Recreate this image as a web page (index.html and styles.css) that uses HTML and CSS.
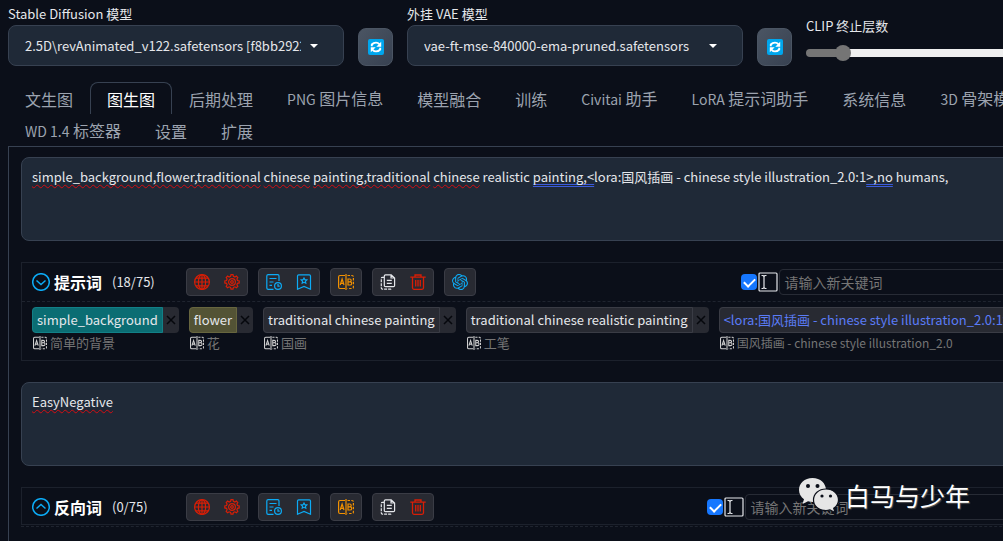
FILE: index.html
```html
<!DOCTYPE html>
<html lang="zh-CN">

<head>
    <meta charset="UTF-8">
    <meta name="viewport" content="width=device-width, initial-scale=1.0">
    <title>Stable Diffusion</title>
    <link rel="stylesheet" href="styles.css">
</head>

<body>
    <!-- shared icons -->
    <svg class="sprite" aria-hidden="true">
        <symbol id="i-refresh" viewBox="0 0 16 16">
            <rect width="16" height="16" rx="2" fill="#00a6ed" />
            <path d="M3.800 7.200V5.500Q5.500 3.600 8 3.600q2 0 3.300 1.600M12.200 8.800v1.700Q10.500 12.400 8 12.400q-2 0-3.300-1.600" fill="none" stroke="#fff" stroke-width="1.900" />
            <path d="M13.200 2.800v5H8.300zM2.800 13.200v-5h4.900z" fill="#fff" />
        </symbol>
        <symbol id="i-globe" viewBox="0 0 16 16">
            <circle cx="8" cy="8" r="7.400" />
            <ellipse cx="8" cy="8" rx="3.600" ry="7.400" />
            <path d="M8 .6v14.800M.6 8h14.800M2 4.200h12M2 11.800h12" />
        </symbol>
        <symbol id="i-gear" viewBox="0 0 16 16">
            <path d="M6.600 2.400 7 .7h2l.4 1.700 1.500.6 1.500-.9 1.400 1.400-.9 1.500.6 1.500 1.700.4v2l-1.700.4-.6 1.500.9 1.500-1.400 1.400-1.500-.9-1.500.6-.4 1.700H7l-.4-1.700-1.500-.6-1.500.9-1.400-1.400.9-1.500-.6-1.500L.8 8.900v-2l1.700-.4.6-1.500-.9-1.500 1.400-1.400 1.500.9z" />
            <circle cx="8" cy="8" r="3.400" />
            <circle cx="8" cy="8" r="1.300" />
        </symbol>
        <symbol id="i-history" viewBox="0 0 16 16">
            <path d="M7.500 15.300H2.200Q.8 15.300.8 14V2Q.8.700 2.200.700h9.600Q13 .7 13 2v5M3.500 4.500h7M3.500 8h4M3.500 11.300h2.500" />
            <circle cx="12" cy="12" r="3.400" />
            <path d="M12 10v2.200h1.700" />
        </symbol>
        <symbol id="i-mark" viewBox="0 0 16 16">
            <path d="M1.500 15.200V2Q1.500.8 2.700.8h10.600q1.200 0 1.200 1.200v13.200L8 12.500z" />
            <path d="m8 4 .9 1.700 1.900.3-1.400 1.300.4 1.900L8 8.300l-1.800.9.400-1.900L5.200 6l1.900-.3z" />
        </symbol>
        <symbol id="i-ab" viewBox="0 0 16 16">
            <path d="M7 1.500H2Q.6 1.500.6 3v10q0 1.500 1.400 1.500h5M8 0v16" />
            <path d="M9.500 1.500H14q1.400 0 1.400 1.500v10q0 1.500-1.400 1.500H9.500" stroke-dasharray="2.500 1.300" />
            <path d="m2.200 11 1.900-6 1.900 6M2.800 9.300h2.600M10 5v6h2q1.700 0 1.700-1.600T12 7.800h-2 1.700q1.500 0 1.500-1.400T11.700 5z" />
        </symbol>
        <symbol id="i-copy" viewBox="0 0 16 16">
            <path d="M5.500.8h5.700L14.600 4v7.500q0 1.200-1.200 1.200H5.500q-1.200 0-1.200-1.200V2q0-1.200 1.200-1.200zM11 .8V4h3.500M6.800 6.300h5M6.800 9.300h5" />
            <path d="M4 3.300H2.500q-1.200 0-1.200 1.200v9.500q0 1.200 1.200 1.200h7.700q1.200 0 1.200-1.200" stroke-dasharray="3 1" />
        </symbol>
        <symbol id="i-trash" viewBox="0 0 16 16">
            <path d="M.3 3.200h15.400M5 3V1h6v2M2.500 3.200v10.600q0 1.500 1.500 1.500h8q1.500 0 1.500-1.500V3.200M5.700 6v6.500M8 6v6.500M10.300 6v6.500" stroke-width="1.300" />
        </symbol>
        <symbol id="i-gpt" viewBox="0 0 24 24">
            <path fill="currentColor" stroke="none" d="M22.2819 9.8211a5.9847 5.9847 0 0 0-.5157-4.9108 6.0462 6.0462 0 0 0-6.5098-2.9A6.0651 6.0651 0 0 0 4.9807 4.1818a5.9847 5.9847 0 0 0-3.9977 2.9 6.0462 6.0462 0 0 0 .7427 7.0966 5.98 5.98 0 0 0 .511 4.9107 6.051 6.051 0 0 0 6.5146 2.9001A5.9847 5.9847 0 0 0 13.2599 24a6.0557 6.0557 0 0 0 5.7718-4.2058 5.9894 5.9894 0 0 0 3.9977-2.9001 6.0557 6.0557 0 0 0-.7475-7.0729zm-9.022 12.6081a4.4755 4.4755 0 0 1-2.8764-1.0408l.1419-.0804 4.7783-2.7582a.7948.7948 0 0 0 .3927-.6813v-6.7369l2.02 1.1686a.071.071 0 0 1 .038.052v5.5826a4.504 4.504 0 0 1-4.4945 4.4944zm-9.6607-4.1254a4.4708 4.4708 0 0 1-.5346-3.0137l.142.0852 4.783 2.7582a.7712.7712 0 0 0 .7806 0l5.8428-3.3685v2.3324a.0804.0804 0 0 1-.0332.0615L9.74 19.9502a4.4992 4.4992 0 0 1-6.1408-1.6464zM2.3408 7.8956a4.485 4.485 0 0 1 2.3655-1.9728V11.6a.7664.7664 0 0 0 .3879.6765l5.8144 3.3543-2.0201 1.1685a.0757.0757 0 0 1-.071 0l-4.8303-2.7865A4.504 4.504 0 0 1 2.3408 7.872zm16.5963 3.8558L13.1038 8.364 15.1192 7.2a.0757.0757 0 0 1 .071 0l4.8303 2.7913a4.4944 4.4944 0 0 1-.6765 8.1042v-5.6772a.79.79 0 0 0-.407-.667zm2.0107-3.0231l-.142-.0852-4.7735-2.7818a.7759.7759 0 0 0-.7854 0L9.409 9.2297V6.8974a.0662.0662 0 0 1 .0284-.0615l4.8303-2.7866a4.4992 4.4992 0 0 1 6.6802 4.66zM8.3065 12.863l-2.02-1.1638a.0804.0804 0 0 1-.038-.0567V6.0742a4.4992 4.4992 0 0 1 7.3757-3.4537l-.142.0805L8.704 5.459a.7948.7948 0 0 0-.3927.6813zm1.0976-2.3654l2.602-1.4998 2.6069 1.4998v2.9994l-2.5974 1.4997-2.6067-1.4997Z" />
        </symbol>
        <symbol id="i-down" viewBox="0 0 18 18">
            <circle cx="9" cy="9" r="8.300" />
            <path d="m4.500 7.500 4.500 4 4.500-4" />
        </symbol>
        <symbol id="i-up" viewBox="0 0 18 18">
            <circle cx="9" cy="9" r="8.300" />
            <path d="m4.500 10.500 4.500-4 4.500 4" />
        </symbol>
        <symbol id="i-cursor" viewBox="0 0 20 20">
            <rect x="1" y="1" width="18" height="18" rx="1" />
            <path d="M3.500 3.500h1.500l1 1 1-1h1.500M6 4.500v11M3.500 16.500h1.500l1-1 1 1h1.500" />
        </symbol>
        <symbol id="i-close" viewBox="0 0 16 16">
            <path d="m4 4 8 8M12 4l-8 8" />
        </symbol>
    </svg>

    <div class="app">
        <header class="quick">
            <div class="field">
                <label for="checkpoint">Stable Diffusion 模型</label>
                <div class="select-wrap">
                    <select id="checkpoint">
                        <option>2.5D\revAnimated_v122.safetensors [f8bb2922e1]</option>
                    </select>
                </div>
            </div>
            <button class="refresh" aria-label="刷新模型"><svg><use href="#i-refresh" /></svg></button>
            <div class="field">
                <label for="vae">外挂 VAE 模型</label>
                <div class="select-wrap">
                    <select id="vae">
                        <option>vae-ft-mse-840000-ema-pruned.safetensors</option>
                    </select>
                </div>
            </div>
            <button class="refresh" aria-label="刷新 VAE"><svg><use href="#i-refresh" /></svg></button>
            <div class="clip">
                <label for="clip">CLIP 终止层数</label>
                <input type="range" id="clip" min="1" max="12" value="2">
            </div>
        </header>

        <nav class="tabs">
            <button>文生图</button>
            <button class="selected">图生图</button>
            <button>后期处理</button>
            <button><span class="en">PNG</span> 图片信息</button>
            <button>模型融合</button>
            <button>训练</button>
            <button><span class="en">Civitai</span> 助手</button>
            <button><span class="en">LoRA</span> 提示词助手</button>
            <button>系统信息</button>
            <button><span class="en">3D</span> 骨架模型编辑</button>
            <button><span class="en">WD 1.4</span> 标签器</button>
            <button>设置</button>
            <button>扩展</button>
        </nav>

        <main class="panel">
            <div class="prompt">
                <div class="marks" aria-hidden="true"><span class="bad">simple_background,flower,traditional</span> <span class="bad">chinese</span> <span class="bad">painting,traditional</span> <span class="bad">chinese</span> realistic <span class="hint">painting,&lt;</span>lora:国风插画 - chinese style illustration_2.0:1<span class="hint">&gt;,no</span> humans,</div>
                <textarea aria-label="提示词" spellcheck="false">simple_background,flower,traditional chinese painting,traditional chinese realistic painting,&lt;lora:国风插画 - chinese style illustration_2.0:1&gt;,no humans,</textarea>
            </div>

            <section class="keywords">
                <div class="head">
                    <div class="title">
                        <button class="fold" aria-label="折叠"><svg><use href="#i-down" /></svg></button>
                        <h2>提示词</h2>
                        <span class="count">(18/75)</span>
                    </div>
                    <div class="group red">
                        <button aria-label="语言"><svg><use href="#i-globe" /></svg></button>
                        <button aria-label="设置"><svg><use href="#i-gear" /></svg></button>
                    </div>
                    <div class="group blue">
                        <button aria-label="历史记录"><svg><use href="#i-history" /></svg></button>
                        <button aria-label="收藏"><svg><use href="#i-mark" /></svg></button>
                    </div>
                    <div class="group orange">
                        <button aria-label="翻译"><svg><use href="#i-ab" /></svg></button>
                    </div>
                    <div class="group">
                        <button aria-label="复制"><svg><use href="#i-copy" /></svg></button>
                        <button class="red" aria-label="删除"><svg><use href="#i-trash" /></svg></button>
                    </div>
                    <div class="group blue">
                        <button aria-label="ChatGPT"><svg><use href="#i-gpt" /></svg></button>
                    </div>
                    <div class="add">
                        <input type="checkbox" aria-label="启用输入框" checked>
                        <svg class="cursor"><use href="#i-cursor" /></svg>
                        <input type="text" placeholder="请输入新关键词" aria-label="新关键词">
                    </div>
                </div>
                <ul class="tags">
                    <li>
                        <div class="tag teal"><span>simple_background</span><button aria-label="移除"><svg><use href="#i-close" /></svg></button></div>
                        <div class="local"><svg><use href="#i-ab" /></svg>简单的背景</div>
                    </li>
                    <li>
                        <div class="tag olive"><span>flower</span><button aria-label="移除"><svg><use href="#i-close" /></svg></button></div>
                        <div class="local"><svg><use href="#i-ab" /></svg>花</div>
                    </li>
                    <li>
                        <div class="tag"><span>traditional chinese painting</span><button aria-label="移除"><svg><use href="#i-close" /></svg></button></div>
                        <div class="local"><svg><use href="#i-ab" /></svg>国画</div>
                    </li>
                    <li>
                        <div class="tag"><span>traditional chinese realistic painting</span><button aria-label="移除"><svg><use href="#i-close" /></svg></button></div>
                        <div class="local"><svg><use href="#i-ab" /></svg>工笔</div>
                    </li>
                    <li>
                        <div class="tag lora"><span>&lt;lora:国风插画 - chinese style illustration_2.0:1&gt;</span><button aria-label="移除"><svg><use href="#i-close" /></svg></button></div>
                        <div class="local small"><svg><use href="#i-ab" /></svg>国风插画 - chinese style illustration_2.0</div>
                    </li>
                </ul>
            </section>

            <div class="prompt">
                <div class="marks" aria-hidden="true"><span class="bad">EasyNegative</span></div>
                <textarea aria-label="反向词" spellcheck="false">EasyNegative</textarea>
            </div>

            <section class="keywords folded">
                <div class="head">
                    <div class="title">
                        <button class="fold" aria-label="展开"><svg><use href="#i-up" /></svg></button>
                        <h2>反向词</h2>
                        <span class="count">(0/75)</span>
                    </div>
                    <div class="group red">
                        <button aria-label="语言"><svg><use href="#i-globe" /></svg></button>
                        <button aria-label="设置"><svg><use href="#i-gear" /></svg></button>
                    </div>
                    <div class="group blue">
                        <button aria-label="历史记录"><svg><use href="#i-history" /></svg></button>
                        <button aria-label="收藏"><svg><use href="#i-mark" /></svg></button>
                    </div>
                    <div class="group orange">
                        <button aria-label="翻译"><svg><use href="#i-ab" /></svg></button>
                    </div>
                    <div class="group">
                        <button aria-label="复制"><svg><use href="#i-copy" /></svg></button>
                        <button class="red" aria-label="删除"><svg><use href="#i-trash" /></svg></button>
                    </div>
                    <div class="add wide">
                        <input type="checkbox" aria-label="启用输入框" checked>
                        <svg class="cursor"><use href="#i-cursor" /></svg>
                        <input type="text" placeholder="请输入新关键词" aria-label="新关键词">
                    </div>
                </div>
            </section>
            <div class="divider"></div>
        </main>
    </div>

    <div class="watermark">
        <svg viewBox="0 0 42 36">
            <path d="M14.500 1C6.500 1 1 6.200 1 13c0 4 2 7 5 9.200L4.500 27l5.500-2.800q2.500.8 5 .8C23 25 28 19.500 28 13S22.500 1 14.500 1z" />
            <path class="front" d="M28 12c-7.500 0-12.500 5-12.500 11S20.500 33.500 28 33.500q2 0 4-.6l5 2.600-1.300-4.200Q40.500 28 40.500 23c0-6-5-11-12.500-11z" />
            <g class="eyes">
                <circle cx="10" cy="9" r="2" />
                <circle cx="19.500" cy="9" r="2" />
                <circle cx="24" cy="19" r="1.600" />
                <circle cx="32.500" cy="19" r="1.600" />
            </g>
        </svg>
        <span>白马与少年</span>
    </div>
</body>

</html>
```

FILE: styles.css
```css
* {
    box-sizing: border-box;
}

body {
    margin: 0;
    background: #0b0f19;
    color: #e5e7eb;
    font-family: "Noto Sans CJK SC", sans-serif;
    font-size: 13px;
    line-height: 20px;
    overflow: hidden;
}

button,
input,
select,
textarea {
    font: inherit;
    color: inherit;
}

button {
    padding: 0;
    border: 0;
    background: none;
}

svg {
    display: block;
    width: 16px;
    height: 16px;
    fill: none;
    stroke: currentColor;
    stroke-width: 1.2;
}

.sprite {
    position: absolute;
    width: 0;
    height: 0;
}

.app {
    width: 114%;
    padding: 4px 8px 0;
}

/* model row */
.quick {
    display: flex;
    align-items: flex-end;
    gap: 14px;
}

.field {
    width: 336px;
}

.field label,
.clip label {
    display: block;
}

.select-wrap {
    position: relative;
    margin-top: 1px;
}

.select-wrap::after {
    content: "";
    position: absolute;
    right: 26px;
    top: 19px;
    border: 4px solid transparent;
    border-top-color: #fff;
    border-bottom: 0;
}

select {
    display: block;
    width: 100%;
    height: 41px;
    padding: 0 42px 0 16px;
    border: 1px solid #374151;
    border-radius: 8px;
    background: #1f2937;
    appearance: none;
}

.refresh {
    display: flex;
    align-items: center;
    justify-content: center;
    width: 35px;
    height: 38px;
    border: 1px solid #4b5563;
    border-radius: 8px;
    background: linear-gradient(to bottom right, #4b5563, #374151);
}

.refresh svg {
    stroke: none;
}

.clip {
    flex: 1;
    padding-bottom: 5px;
}

input[type="range"] {
    display: block;
    width: 100%;
    height: 16px;
    margin: 9px 0 0;
    background: none;
    appearance: none;
}

input[type="range"]::-webkit-slider-runnable-track {
    height: 8px;
    border: 1px solid #b2b2b2;
    border-radius: 4px;
    background: linear-gradient(to right, #757575 11%, #efefef 11%) border-box;
    border-color: transparent;
}

input[type="range"]::-webkit-slider-thumb {
    width: 16px;
    height: 16px;
    margin-top: -5px;
    border-radius: 50%;
    background: #757575;
    appearance: none;
}

/* tabs */
.tabs {
    display: flex;
    flex-wrap: wrap;
    margin-top: 16px;
}

.tabs button {
    height: 32px;
    padding: 0 16px;
    border: 1px solid transparent;
    border-bottom: 0;
    border-radius: 8px 8px 0 0;
    color: #9ca3af;
    font-size: 16px;
    line-height: 24px;
}

.tabs .selected {
    border-color: #374151;
    color: #fff;
}

.tabs .en {
    font-size: 14px;
}

.panel {
    padding: 10px 12px 40px;
    border: 1px solid #374151;
}

/* prompt boxes, the marks layer lies under the text */
.prompt {
    display: grid;
    border: 1px solid #374151;
    border-radius: 8px;
    background: #1f2937;
}

.marks,
.prompt textarea {
    grid-area: 1 / 1;
    min-height: 82px;
    margin: 0;
    padding: 9px 10px;
    border: 0;
    background: none;
    line-height: 20px;
    white-space: pre-wrap;
    resize: none;
}

.marks {
    color: transparent;
}

.bad {
    text-decoration: underline wavy #d40d12 1px;
    text-decoration-skip-ink: none;
    text-underline-offset: 2px;
}

.hint {
    text-decoration: underline double #3b5bdb 1px;
    text-decoration-skip-ink: none;
    text-underline-offset: 2px;
}

/* keyword boxes */
.keywords {
    margin: 21px 0;
    border: 1px solid #1c212c;
}

.head {
    display: flex;
    align-items: center;
    gap: 10px;
    padding: 5px 10px;
}

.title {
    display: flex;
    align-items: center;
    width: 144px;
}

.title h2 {
    margin: 0 10px 0 4px;
    color: #fff;
    font-size: 16px;
    line-height: 24px;
}

.fold,
.blue {
    color: #0cabf5;
}

.fold svg {
    width: 18px;
    height: 18px;
    stroke-width: 1.5;
}

.group {
    display: flex;
    border: 1px solid #3a3c45;
    border-radius: 4px;
    background: #282a32;
}

.group button {
    padding: 5px 7px;
}

.red,
.group .red {
    color: #d81e06;
}

.orange {
    color: #f29100;
}

.add {
    display: flex;
    align-items: center;
    width: 370px;
    margin-left: auto;
}

.add.wide {
    width: 404px;
}

.add input[type="checkbox"] {
    display: grid;
    place-items: center;
    width: 16px;
    height: 16px;
    margin: 0;
    border-radius: 4px;
    background: #1677ff;
    appearance: none;
}

.add input[type="checkbox"]:checked::before {
    content: "";
    width: 9px;
    height: 5px;
    margin-top: -2px;
    border: solid #fff;
    border-width: 0 0 2px 2px;
    transform: rotate(-45deg);
}

.cursor {
    width: 20px;
    height: 20px;
    margin: 0 1px;
}

.add input[type="text"] {
    flex: 1;
    min-width: 0;
    height: 26px;
    padding: 0 4px;
    border: 1px solid #272b35;
    border-radius: 4px;
    background: none;
    font-size: 14px;
}

.add input::placeholder {
    color: #757575;
}

.tags {
    display: flex;
    gap: 10px;
    margin: 0;
    padding: 5px 10px 7px;
    border-top: 1px dashed #1f242f;
    list-style: none;
    white-space: nowrap;
}

.tag {
    display: flex;
    width: max-content;
    height: 26px;
    border-radius: 4px;
    background: #282a32;
}

.tag span {
    padding: 0 4px;
    border: 1px solid #3a3c45;
    border-radius: 4px 0 0 4px;
    line-height: 24px;
}

.tag button {
    width: 16px;
    color: #05070c;
}

.tag button svg {
    stroke-width: 1.5;
}

.teal span {
    border-color: #128087;
    background: #0b6d73;
}

.olive span {
    border-color: #67663f;
    background: #535335;
}

.lora span {
    color: #5b7cf7;
}

.local {
    display: flex;
    align-items: center;
    gap: 2px;
    color: #757575;
}

.local svg {
    width: 16px;
    height: 16px;
    padding: 1px;
    color: #d0d0d0;
}

.local.small {
    font-size: 12px;
}

.folded {
    margin-bottom: 1px;
}

.folded .head {
    padding-bottom: 3px;
}

.divider {
    border-top: 1px dashed #1f242f;
}

.watermark {
    position: absolute;
    right: 33px;
    bottom: 28px;
    display: flex;
    align-items: center;
    gap: 5px;
    color: #fff;
    font-size: 25px;
    line-height: 36px;
    text-shadow: 1px 1px 1px #555;
}

.watermark svg {
    width: 42px;
    height: 36px;
    fill: #e6e6e6;
    stroke: none;
}

.watermark .front {
    stroke: #0b0f19;
}

.watermark .eyes {
    fill: #0b0f19;
}
```
